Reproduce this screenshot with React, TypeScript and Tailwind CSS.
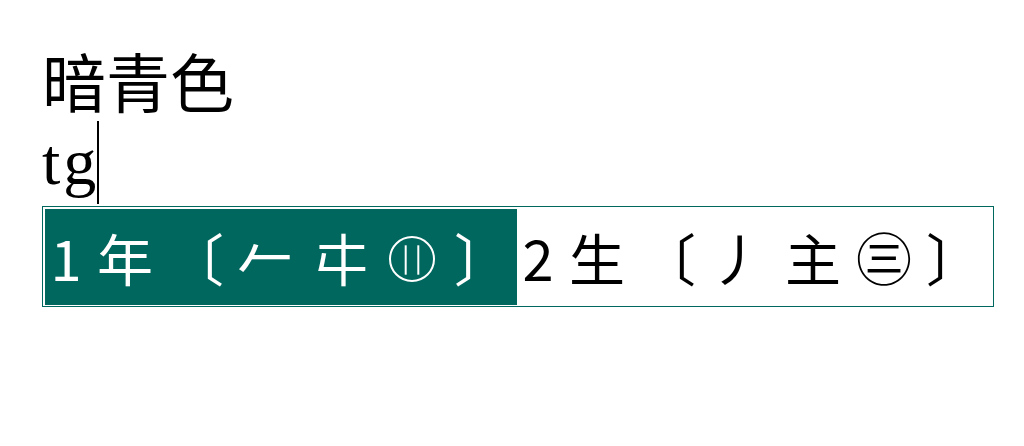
const CJK = "'Noto Sans CJK SC', 'Noto Sans', sans-serif";
const SERIF = "'Liberation Serif', 'Noto Sans CJK SC', serif";

function CircledBars({ color }: { color: string }) {
  return (
    <svg width="48" height="48" viewBox="0 0 48 48" className="h-[48px] w-[48px] shrink-0">
      <circle cx="24" cy="24" r="22" fill="none" stroke={color} strokeWidth="2" />
      <line x1="17.7" y1="10.3" x2="17.7" y2="39.7" stroke={color} strokeWidth="2" />
      <line x1="30.3" y1="10.3" x2="30.3" y2="39.7" stroke={color} strokeWidth="2" />
    </svg>
  );
}

interface Candidate {
  index: string;
  word: string;
  parts: string[];
  mark: React.ReactNode;
}

function CandidateCell({ c, active }: { c: Candidate; active: boolean }) {
  return (
    <div
      className={`flex h-[96px] w-[472px] shrink-0 items-center text-[56px] leading-none ${
        active ? "bg-[#00675f] text-white" : "bg-white text-black"
      }`}
      style={{ fontFamily: CJK }}
    >
      <span className="w-[42px] shrink-0 text-center">{c.index}</span>
      <span className="ml-[10px] w-[56px] shrink-0 text-center">{c.word}</span>
      <span className="ml-[15px] w-[56px] shrink-0">〔</span>
      <span className="ml-[13px] w-[56px] shrink-0 text-center">{c.parts[0]}</span>
      <span className="ml-[20px] w-[56px] shrink-0 text-center">{c.parts[1]}</span>
      <span className="ml-[19px] mt-[4px] flex w-[48px] shrink-0 items-center justify-center">{c.mark}</span>
      <span className="ml-[18px] w-[56px] shrink-0">〕</span>
    </div>
  );
}

const candidates: Candidate[] = [
  { index: "1", word: "年", parts: ["𠂉", "㐄"], mark: <CircledBars color="#ffffff" /> },
  { index: "2", word: "生", parts: ["丿", "主"], mark: <span className="-mt-[6px]">㊂</span> },
];

export default function App() {
  return (
    <div className="h-[446px] w-[1024px] bg-white pl-[42px] pt-[47px]">
      <div className="text-[64px] leading-none text-black" style={{ fontFamily: CJK }}>
        暗青色
      </div>
      <div className="mt-[10px] flex h-[85px] items-start">
        <span
          className="mt-[8px] flex text-[66px] leading-none text-black"
          style={{ fontFamily: SERIF }}
        >
          <span className="mr-[3px]">t</span>
          <span>g</span>
        </span>
        <span className="ml-px h-[83px] w-[2px] bg-black" />
      </div>
      <div className="flex w-[952px] border border-[#00675f] px-[2px] pt-[2px] pb-px">
        {candidates.map((c, i) => (
          <CandidateCell key={c.index} c={c} active={i === 0} />
        ))}
      </div>
    </div>
  );
}
